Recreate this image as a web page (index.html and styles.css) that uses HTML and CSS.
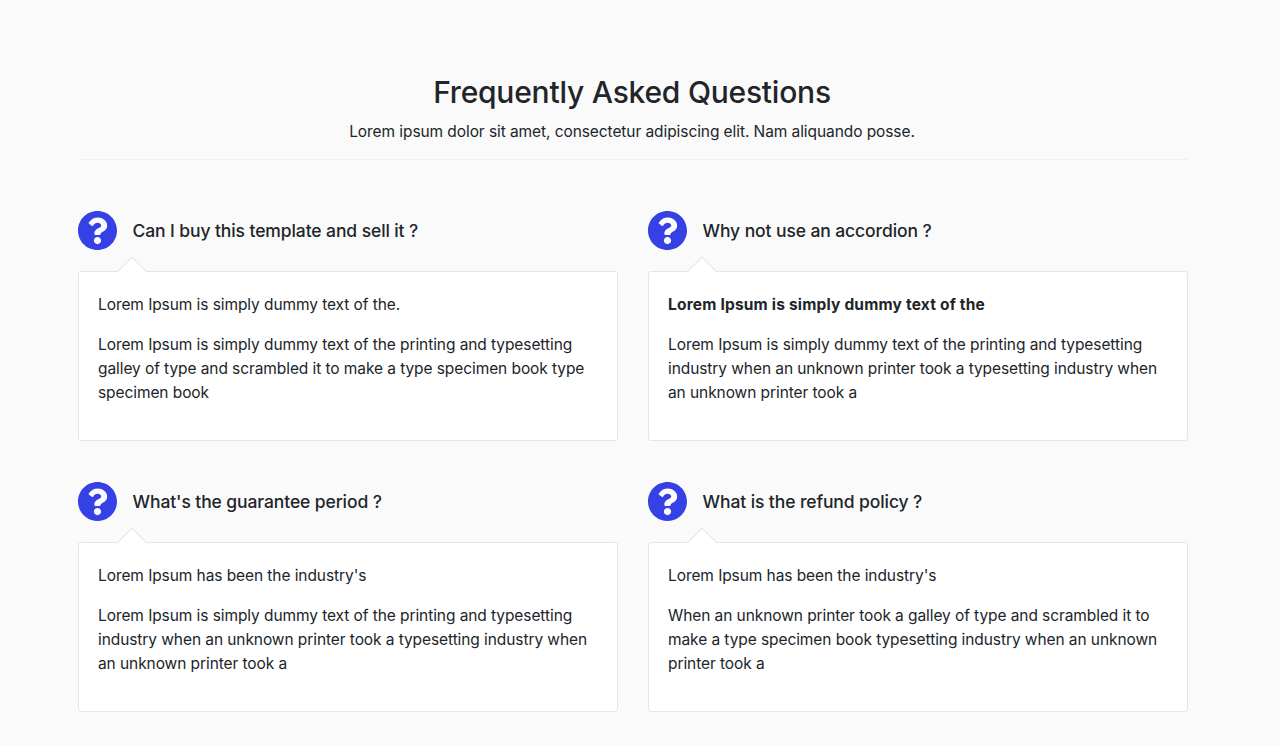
FILE: index.html
```html
<!DOCTYPE html>
<html>
<head>
    <title>FAQ</title>
    <link rel="stylesheet" href="styles.css">
</head>
<body>
    <section class="faq">
        <header class="faq-header">
            <h1>Frequently Asked Questions</h1>
            <p>Lorem ipsum dolor sit amet, consectetur adipiscing elit. Nam aliquando posse.</p>
        </header>
        <div class="faq-grid">
            <article class="faq-item">
                <div class="question">
                    <svg class="question-icon" viewBox="8 8 496 496"><path d="M504 256c0 136.997-111.043 248-248 248S8 392.997 8 256C8 119.083 119.043 8 256 8s248 111.083 248 248zM262.655 90c-54.497 0-89.255 22.957-116.549 63.758-3.536 5.286-2.353 12.415 2.715 16.258l34.699 26.31c5.205 3.947 12.621 3.008 16.665-2.122 17.864-22.658 30.113-35.797 57.303-35.797 20.429 0 45.698 13.148 45.698 32.958 0 14.976-12.363 22.667-32.534 33.976C247.128 238.528 216 254.941 216 296v4c0 6.627 5.373 12 12 12h56c6.627 0 12-5.373 12-12v-1.333c0-28.462 83.186-29.647 83.186-106.667 0-58.002-60.165-102-116.531-102zM256 338c-25.365 0-46 20.635-46 46 0 25.364 20.635 46 46 46s46-20.636 46-46c0-25.365-20.635-46-46-46z"/></svg>
                    <h2>Can I buy this template and sell it ?</h2>
                </div>
                <div class="answer">
                    <p>Lorem Ipsum is simply dummy text of the.</p>
                    <p>Lorem Ipsum is simply dummy text of the printing and typesetting galley of type and scrambled it to make a type specimen book type specimen book</p>
                </div>
            </article>
            <article class="faq-item">
                <div class="question">
                    <svg class="question-icon" viewBox="8 8 496 496"><path d="M504 256c0 136.997-111.043 248-248 248S8 392.997 8 256C8 119.083 119.043 8 256 8s248 111.083 248 248zM262.655 90c-54.497 0-89.255 22.957-116.549 63.758-3.536 5.286-2.353 12.415 2.715 16.258l34.699 26.31c5.205 3.947 12.621 3.008 16.665-2.122 17.864-22.658 30.113-35.797 57.303-35.797 20.429 0 45.698 13.148 45.698 32.958 0 14.976-12.363 22.667-32.534 33.976C247.128 238.528 216 254.941 216 296v4c0 6.627 5.373 12 12 12h56c6.627 0 12-5.373 12-12v-1.333c0-28.462 83.186-29.647 83.186-106.667 0-58.002-60.165-102-116.531-102zM256 338c-25.365 0-46 20.635-46 46 0 25.364 20.635 46 46 46s46-20.636 46-46c0-25.365-20.635-46-46-46z"/></svg>
                    <h2>Why not use an accordion ?</h2>
                </div>
                <div class="answer">
                    <p><strong>Lorem Ipsum is simply dummy text of the</strong></p>
                    <p>Lorem Ipsum is simply dummy text of the printing and typesetting industry when an unknown printer took a typesetting industry when an unknown printer took a</p>
                </div>
            </article>
            <article class="faq-item">
                <div class="question">
                    <svg class="question-icon" viewBox="8 8 496 496"><path d="M504 256c0 136.997-111.043 248-248 248S8 392.997 8 256C8 119.083 119.043 8 256 8s248 111.083 248 248zM262.655 90c-54.497 0-89.255 22.957-116.549 63.758-3.536 5.286-2.353 12.415 2.715 16.258l34.699 26.31c5.205 3.947 12.621 3.008 16.665-2.122 17.864-22.658 30.113-35.797 57.303-35.797 20.429 0 45.698 13.148 45.698 32.958 0 14.976-12.363 22.667-32.534 33.976C247.128 238.528 216 254.941 216 296v4c0 6.627 5.373 12 12 12h56c6.627 0 12-5.373 12-12v-1.333c0-28.462 83.186-29.647 83.186-106.667 0-58.002-60.165-102-116.531-102zM256 338c-25.365 0-46 20.635-46 46 0 25.364 20.635 46 46 46s46-20.636 46-46c0-25.365-20.635-46-46-46z"/></svg>
                    <h2>What's the guarantee period ?</h2>
                </div>
                <div class="answer">
                    <p>Lorem Ipsum has been the industry's</p>
                    <p>Lorem Ipsum is simply dummy text of the printing and typesetting industry when an unknown printer took a typesetting industry when an unknown printer took a</p>
                </div>
            </article>
            <article class="faq-item">
                <div class="question">
                    <svg class="question-icon" viewBox="8 8 496 496"><path d="M504 256c0 136.997-111.043 248-248 248S8 392.997 8 256C8 119.083 119.043 8 256 8s248 111.083 248 248zM262.655 90c-54.497 0-89.255 22.957-116.549 63.758-3.536 5.286-2.353 12.415 2.715 16.258l34.699 26.31c5.205 3.947 12.621 3.008 16.665-2.122 17.864-22.658 30.113-35.797 57.303-35.797 20.429 0 45.698 13.148 45.698 32.958 0 14.976-12.363 22.667-32.534 33.976C247.128 238.528 216 254.941 216 296v4c0 6.627 5.373 12 12 12h56c6.627 0 12-5.373 12-12v-1.333c0-28.462 83.186-29.647 83.186-106.667 0-58.002-60.165-102-116.531-102zM256 338c-25.365 0-46 20.635-46 46 0 25.364 20.635 46 46 46s46-20.636 46-46c0-25.365-20.635-46-46-46z"/></svg>
                    <h2>What is the refund policy ?</h2>
                </div>
                <div class="answer">
                    <p>Lorem Ipsum has been the industry's</p>
                    <p>When an unknown printer took a galley of type and scrambled it to make a type specimen book typesetting industry when an unknown printer took a</p>
                </div>
            </article>
        </div>
    </section>
</body>
</html>
```
FILE: styles.css
```css
html, body {
    height: 745px;
    overflow: hidden;
}
body {
    margin: 0;
    background: #fafafa;
    color: #212529;
    font-family: Inter, sans-serif;
    font-size: 15.5px;
    letter-spacing: -0.08px;
    line-height: 24px;
}
.faq {
    width: 1110px;
    margin-left: 78px;
    padding-top: 70px;
}
.faq-header {
    text-align: center;
    padding: 0 2px 15px 0;
    border-bottom: 1px solid #f0f0f0;
}
.faq-header h1 {
    margin: 0 0 5px;
    font-size: 30px;
    font-weight: 500;
    letter-spacing: -0.23px;
    line-height: 45px;
}
.faq-header p {
    margin: 0;
}
.faq-grid {
    display: grid;
    grid-template-columns: 540px 540px;
    column-gap: 30px;
    row-gap: 41px;
    margin-top: 51px;
}
.question {
    display: flex;
    align-items: center;
    gap: 15.5px;
    height: 39px;
    margin-bottom: 21px;
}
.question-icon {
    width: 39px;
    height: 39px;
    fill: #3540e5;
    flex-shrink: 0;
}
.question h2 {
    margin: 0;
    font-size: 17.5px;
    font-weight: 500;
    letter-spacing: -0.1px;
    line-height: 26px;
}
.answer {
    position: relative;
    box-sizing: border-box;
    height: 170px;
    padding: 21px 19px 0;
    background: #fff;
    border: 1px solid #e6e6e6;
    border-radius: 3px;
}
.answer::before {
    content: "";
    position: absolute;
    top: -11.5px;
    left: 42px;
    width: 21px;
    height: 21px;
    background: #fff;
    border-top: 1px solid #e6e6e6;
    border-left: 1px solid #e6e6e6;
    transform: rotate(45deg);
}
.answer p {
    position: relative;
    margin: 0 0 16px;
}
.answer strong {
    font-weight: 700;
    letter-spacing: 0.19px;
}
```
